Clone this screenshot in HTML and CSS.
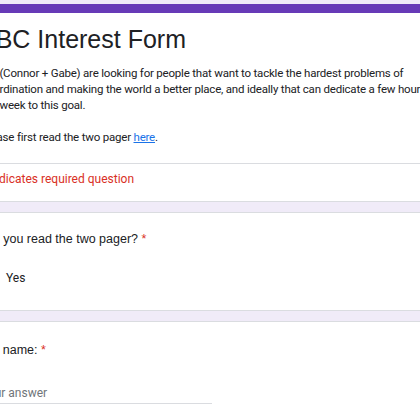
FILE: index.html
```html
<!DOCTYPE html>
<html>
<head>
<meta charset="utf-8">
<link rel="stylesheet" href="styles.css">
</head>
<body>
<div class="page">
  <div class="card header-card">
    <div class="header-main">
      <h1 class="title">ABC Interest Form</h1>
      <p class="desc">We (Connor + Gabe) are looking for people that want to tackle the hardest problems of<br>coordination and making the world a better place, and ideally that can dedicate a few hours<br>per week to this goal.<br><br>Please first read the two pager <a href="#" class="link">here</a>.</p>
    </div>
    <div class="required-note">* Indicates required question</div>
  </div>

  <div class="card question">
    <div class="q-title">Did you read the two pager? <span class="star">*</span></div>
    <label class="option"><span class="radio"></span><span class="opt-label">Yes</span></label>
  </div>

  <div class="card question name-q">
    <div class="q-title">Your name: <span class="star">*</span></div>
    <div class="answer">Your answer</div>
  </div>
</div>
</body>
</html>
```

FILE: styles.css
```css
html, body {
  margin: 0;
  padding: 0;
}
body {
  background: #f0ebf8;
  overflow: hidden;
  width: 420px;
  height: 420px;
}
.page {
  margin-left: -44px;
  width: 760px;
  padding-top: 4px;
  display: flex;
  flex-direction: column;
  gap: 10px;
}
.card {
  background: #fff;
  border: 1px solid #dadce0;
  border-radius: 8px;
}
.header-card {
  border-top: 9px solid #673ab7;
}
.header-main {
  padding: 11px 24px 18px 24px;
  border-bottom: 1px solid #dadce0;
}
.title {
  margin: 0 0 0 -2px;
  font-family: "Liberation Sans", Arial, sans-serif;
  font-weight: 400;
  font-size: 25px;
  line-height: 30px;
  color: #202124;
}
.desc {
  margin: 11px 0 0 0;
  font-family: Roboto, "Liberation Sans", sans-serif;
  font-size: 11.5px;
  letter-spacing: -0.2px;
  line-height: 16px;
  color: #202124;
  white-space: nowrap;
}
.link {
  color: #1a73e8;
  text-decoration: underline;
}
.required-note {
  padding: 7px 24px 14px 24px;
  font-family: Roboto, "Liberation Sans", sans-serif;
  font-size: 12px;
  line-height: 16px;
  color: #d93025;
}
.question {
  padding: 17px 24px 24px 24px;
}
.name-q {
  padding-top: 19px;
}
.q-title {
  font-family: "Liberation Sans", Arial, sans-serif;
  font-size: 12.5px;
  line-height: 18px;
  color: #202124;
}
.name-q .q-title {
  margin-left: -7px;
}
.star {
  color: #d93025;
}
.option {
  display: flex;
  align-items: center;
  gap: 9px;
  margin-top: 22px;
}
.radio {
  width: 14px;
  height: 14px;
  border: 1px solid #5f6368;
  border-radius: 50%;
}
.opt-label {
  font-family: Roboto, "Liberation Sans", sans-serif;
  font-size: 12px;
  line-height: 16px;
  color: #202124;
}
.answer {
  margin-top: 26px;
  width: 231px;
  padding-bottom: 2px;
  border-bottom: 1px solid #dadce0;
  font-family: Roboto, "Liberation Sans", sans-serif;
  font-size: 12px;
  line-height: 16px;
  color: #70757a;
}
```
